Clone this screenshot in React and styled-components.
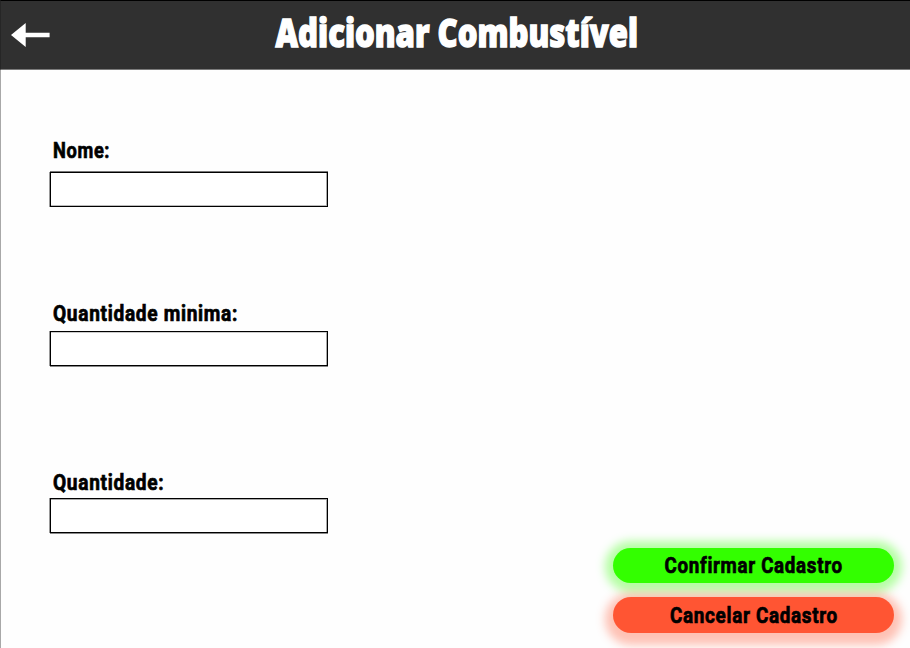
import React from "react";
import styled, { createGlobalStyle } from "styled-components";

const GlobalStyle = createGlobalStyle`
  *, *::before, *::after { box-sizing: border-box; }
  body { margin: 0; overflow: hidden; background: #fff; }
`;

const Screen = styled.div`
  display: flex;
  flex-direction: column;
  width: 910px;
  height: 648px;
  overflow: hidden;
  background: #fefefe;
  color: #000;
`;

const Header = styled.header`
  display: grid;
  grid-template-columns: 60px 1fr 57px;
  align-items: center;
  flex: none;
  height: 70px;
  padding-bottom: 1px;
  border-top: 1px solid #000;
  border-bottom: 1px solid #7b7b7b;
  border-left: 1px solid #262626;
  background: #303030;
`;

const BackButton = styled.button`
  display: block;
  width: 40px;
  height: 26px;
  margin: 1px 0 0 10px;
  padding: 0;
  border: 0;
  background: none;

  svg { display: block; }
`;

const Title = styled.h1`
  display: flex;
  justify-content: center;
  margin: 0 0 6px;
  color: #fff;
  font: 800 38px/48px "Open Sans", sans-serif;
  white-space: nowrap;
  -webkit-text-stroke: 1.4px #fff;

  span { flex: none; transform: scaleX(${(p) => p.$stretch}); }
`;

const Content = styled.main`
  display: flex;
  flex: 1;
  justify-content: space-between;
  border-left: 1px solid #a8a8a8;
`;

const Form = styled.form`
  display: flex;
  flex-direction: column;
  width: 279px;
  margin-left: 48px;
`;

const Field = styled.div`
  display: flex;
  flex-direction: column;
  margin-top: ${(p) => p.$top}px;
`;

const Label = styled.label`
  height: 30px;
  margin: 0 0 ${(p) => p.$gap}px 3.5px;
  font: 700 22.5px/30px Roboto, sans-serif;
  letter-spacing: 0.8px;
  white-space: nowrap;
  -webkit-text-stroke: 0.7px #000;

  span {
    display: inline-block;
    transform: scaleX(${(p) => p.$stretch});
    transform-origin: left;
  }
`;

const Input = styled.input`
  width: 278px;
  height: 35px;
  margin: 0 0 0 1px;
  padding: 0 8px;
  border: 1px solid #000;
  border-radius: 0;
  outline: 0;
  background: #fff;
  box-shadow: -1px 0 #999, inset -1px 0 #aaa, ${(p) => p.$edge};
  font: 18px Roboto, sans-serif;
`;

const Actions = styled.div`
  display: flex;
  flex-direction: column;
  justify-content: flex-end;
  gap: 14px;
  padding: 0 16px 15.3px 0;
`;

const ActionButton = styled.button`
  display: flex;
  align-items: center;
  justify-content: center;
  width: 281px;
  height: 35.5px;
  padding: 0;
  border: 0;
  border-radius: 18px;
  background: ${(p) => p.$color};
  box-shadow: 0 ${(p) => p.$drop}px 10px 8px ${(p) => p.$glow};
  color: #000;
  font: 700 22.5px/30px Roboto, sans-serif;
  letter-spacing: 0.8px;
  white-space: nowrap;
  -webkit-text-stroke: 0.7px #000;

  span { flex: none; transform: scaleX(${(p) => p.$stretch}); }
`;

const fields = [
  { id: "nome", label: "Nome:", top: 65, gap: 7, stretch: 0.81, edge: "0 -1px #777, inset 0 -1px #bbb" },
  { id: "minima", label: "Quantidade minima:", top: 91, gap: 3, stretch: 0.85, edge: "0 1px #888, inset 0 1px #ccc" },
  { id: "quantidade", label: "Quantidade:", top: 101, gap: 1, stretch: 0.85, edge: "0 1px #888, inset 0 1px #aaa" },
];

export default function App() {
  return (
    <>
      <GlobalStyle />
      <Screen>
        <Header>
          <BackButton aria-label="Voltar">
            <svg width="40" height="26" viewBox="0 0 40 26" fill="#fff">
              <path d="M0 13 14.7 1V10.7H38.6V15.3H14.7V25Z" />
            </svg>
          </BackButton>
          <Title $stretch={0.817}><span>Adicionar Combustível</span></Title>
        </Header>
        <Content>
          <Form>
            {fields.map((f) => (
              <Field key={f.id} $top={f.top}>
                <Label htmlFor={f.id} $gap={f.gap} $stretch={f.stretch}><span>{f.label}</span></Label>
                <Input id={f.id} $edge={f.edge} />
              </Field>
            ))}
          </Form>
          <Actions>
            <ActionButton $color="#33ff00" $glow="rgba(51, 255, 0, 0.36)" $drop={1} $stretch={0.835}>
              <span>Confirmar Cadastro</span>
            </ActionButton>
            <ActionButton $color="#ff5533" $glow="rgba(255, 85, 51, 0.36)" $drop={4} $stretch={0.84}>
              <span>Cancelar Cadastro</span>
            </ActionButton>
          </Actions>
        </Content>
      </Screen>
    </>
  );
}
